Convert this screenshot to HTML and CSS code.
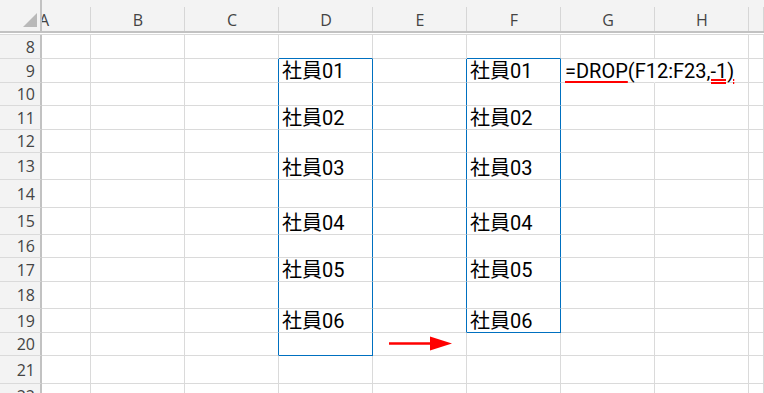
FILE: index.html
```html
<!DOCTYPE html>
<html lang="ja">
<head>
    <meta charset="UTF-8">
    <meta name="viewport" content="width=device-width, initial-scale=1.0">
    <title>DROP関数 - シート</title>
    <link rel="stylesheet" href="styles.css">
</head>
<body>
    <div class="sheet">
        <!-- column headers -->
        <div class="row head">
            <div class="corner"><span class="tri"></span></div>
            <div class="col col-a"><span>A</span></div>
            <div class="col">B</div>
            <div class="col">C</div>
            <div class="col">D</div>
            <div class="col">E</div>
            <div class="col">F</div>
            <div class="col">G</div>
            <div class="col">H</div>
            <div class="col"></div>
        </div>

        <div class="grid-body">
            <div class="row h24">
                <div class="rh">8</div>
                <div class="cell"></div><div class="cell"></div><div class="cell"></div>
                <div class="cell cap"></div><div class="cell"></div><div class="cell cap"></div>
                <div class="cell"></div><div class="cell"></div><div class="cell"></div>
            </div>
            <div class="row h24">
                <div class="rh">9</div>
                <div class="cell"></div><div class="cell"></div><div class="cell edge"></div>
                <div class="cell edge">社員01</div><div class="cell edge"></div><div class="cell edge">社員01</div>
                <div class="cell spill"><span class="u-fn">=DROP</span>(F12:F23<span class="u-arg">,-1)</span></div>
                <div class="cell"></div><div class="cell"></div>
            </div>
            <div class="row h23">
                <div class="rh">10</div>
                <div class="cell"></div><div class="cell"></div><div class="cell edge"></div>
                <div class="cell edge"></div><div class="cell edge"></div><div class="cell edge"></div>
                <div class="cell"></div><div class="cell"></div><div class="cell"></div>
            </div>
            <div class="row h24">
                <div class="rh">11</div>
                <div class="cell"></div><div class="cell"></div><div class="cell edge"></div>
                <div class="cell edge">社員02</div><div class="cell edge"></div><div class="cell edge">社員02</div>
                <div class="cell"></div><div class="cell"></div><div class="cell"></div>
            </div>
            <div class="row h23">
                <div class="rh">12</div>
                <div class="cell"></div><div class="cell"></div><div class="cell edge"></div>
                <div class="cell edge"></div><div class="cell edge"></div><div class="cell edge"></div>
                <div class="cell"></div><div class="cell"></div><div class="cell"></div>
            </div>
            <div class="row h27">
                <div class="rh">13</div>
                <div class="cell"></div><div class="cell"></div><div class="cell edge"></div>
                <div class="cell edge">社員03</div><div class="cell edge"></div><div class="cell edge">社員03</div>
                <div class="cell"></div><div class="cell"></div><div class="cell"></div>
            </div>
            <div class="row h28">
                <div class="rh">14</div>
                <div class="cell"></div><div class="cell"></div><div class="cell edge"></div>
                <div class="cell edge"></div><div class="cell edge"></div><div class="cell edge"></div>
                <div class="cell"></div><div class="cell"></div><div class="cell"></div>
            </div>
            <div class="row h27">
                <div class="rh">15</div>
                <div class="cell"></div><div class="cell"></div><div class="cell edge"></div>
                <div class="cell edge">社員04</div><div class="cell edge"></div><div class="cell edge">社員04</div>
                <div class="cell"></div><div class="cell"></div><div class="cell"></div>
            </div>
            <div class="row h23">
                <div class="rh">16</div>
                <div class="cell"></div><div class="cell"></div><div class="cell edge"></div>
                <div class="cell edge"></div><div class="cell edge"></div><div class="cell edge"></div>
                <div class="cell"></div><div class="cell"></div><div class="cell"></div>
            </div>
            <div class="row h24">
                <div class="rh">17</div>
                <div class="cell"></div><div class="cell"></div><div class="cell edge"></div>
                <div class="cell edge">社員05</div><div class="cell edge"></div><div class="cell edge">社員05</div>
                <div class="cell"></div><div class="cell"></div><div class="cell"></div>
            </div>
            <div class="row h27">
                <div class="rh">18</div>
                <div class="cell"></div><div class="cell"></div><div class="cell edge"></div>
                <div class="cell edge"></div><div class="cell edge"></div><div class="cell edge"></div>
                <div class="cell"></div><div class="cell"></div><div class="cell"></div>
            </div>
            <div class="row h24">
                <div class="rh">19</div>
                <div class="cell"></div><div class="cell"></div><div class="cell edge"></div>
                <div class="cell edge">社員06</div><div class="cell edge"></div><div class="cell edge base">社員06</div>
                <div class="cell"></div><div class="cell"></div><div class="cell"></div>
            </div>
            <div class="row h23">
                <div class="rh">20</div>
                <div class="cell"></div><div class="cell"></div><div class="cell edge"></div>
                <div class="cell edge base"></div>
                <div class="cell arrow-cell">
                    <svg width="65" height="15" viewBox="0 0 65 15">
                        <line x1="1" y1="7.5" x2="44" y2="7.5" stroke="#ff0000" stroke-width="2.5"/>
                        <polygon points="42,0.5 64,7.5 42,14.5" fill="#ff0000"/>
                    </svg>
                </div>
                <div class="cell"></div>
                <div class="cell"></div><div class="cell"></div><div class="cell"></div>
            </div>
            <div class="row h28">
                <div class="rh">21</div>
                <div class="cell"></div><div class="cell"></div><div class="cell"></div>
                <div class="cell"></div><div class="cell"></div><div class="cell"></div>
                <div class="cell"></div><div class="cell"></div><div class="cell"></div>
            </div>
            <div class="row h24">
                <div class="rh">22</div>
                <div class="cell"></div><div class="cell"></div><div class="cell"></div>
                <div class="cell"></div><div class="cell"></div><div class="cell"></div>
                <div class="cell"></div><div class="cell"></div><div class="cell"></div>
            </div>
        </div>
    </div>
</body>
</html>
```

FILE: styles.css
```css
/* Reset */
* {
    margin: 0;
    padding: 0;
    box-sizing: border-box;
}

body {
    background-color: #fff;
    color: #000;
    font-family: Roboto, "Noto Sans CJK JP", sans-serif;
    overflow: hidden;
}

.sheet {
    width: 764px;
    height: 393px;
    overflow: hidden;
}

/* every row shares the same column widths */
.row {
    display: grid;
    grid-template-columns: 42px 49px repeat(7, 94px) 15px;
}

.h23 { height: 23px; }
.h24 { height: 24px; }
.h27 { height: 27px; }
.h28 { height: 28px; }

/* Column header bar */
.head {
    height: 33px;
    background-color: #f3f3f3;
}

.corner {
    display: flex;
    justify-content: flex-end;
    align-items: flex-end;
    padding: 0 3px 4px 0;
    border-right: 2px solid #c2c2c2;
    border-bottom: 2px solid #c2c2c2;
}

.tri {
    width: 14px;
    height: 14px;
    background-color: #b9b9b9;
    clip-path: polygon(100% 0, 100% 100%, 0 100%);
}

.col {
    display: flex;
    justify-content: center;
    align-items: flex-end;
    padding-bottom: 1px;
    border-bottom: 2px solid #c2c2c2;
    background: linear-gradient(#d6d6d6, #d6d6d6) no-repeat right 0 top 7px / 1px 24px;
    font-family: "Open Sans", sans-serif;
    font-size: 16px;
    line-height: 20px;
    color: #444;
}

.col-a {
    justify-content: flex-start;
    overflow: hidden;
}

.col-a span {
    margin-left: -3px;
}

.grid-body {
    margin-top: 1px;
    border-top: 1px solid #dadada;
}

/* Row numbers */
.rh {
    display: flex;
    justify-content: flex-end;
    align-items: center;
    padding-right: 5px;
    background-color: #f3f3f3;
    border-right: 2px solid #c2c2c2;
    border-bottom: 1px solid #dadada;
    font-family: "Open Sans", sans-serif;
    font-size: 16px;
    line-height: 20px;
    color: #444;
}

/* Cells */
.cell {
    display: flex;
    align-items: flex-end;
    padding: 0 0 1px 3px;
    border-right: 1px solid #dadada;
    border-bottom: 1px solid #dadada;
    font-size: 20px;
    line-height: 20px;
    white-space: nowrap;
}

/* blue range outline */
.cap { border-bottom-color: #0070c0; }
.edge { border-right-color: #0070c0; }
.base { border-bottom-color: #0070c0; }

/* formula text running into the next column */
.spill {
    position: relative;
    z-index: 1;
    padding-left: 4px;
    border-right-color: transparent;
}

.u-fn {
    text-decoration: underline 2px #ff0000;
    text-underline-offset: 3px;
}

.u-arg {
    text-decoration: underline double #ff0000;
    text-decoration-thickness: 1.5px;
    text-underline-offset: 1px;
}

.arrow-cell {
    align-items: flex-start;
    padding: 3px 0 0 15px;
}
```
